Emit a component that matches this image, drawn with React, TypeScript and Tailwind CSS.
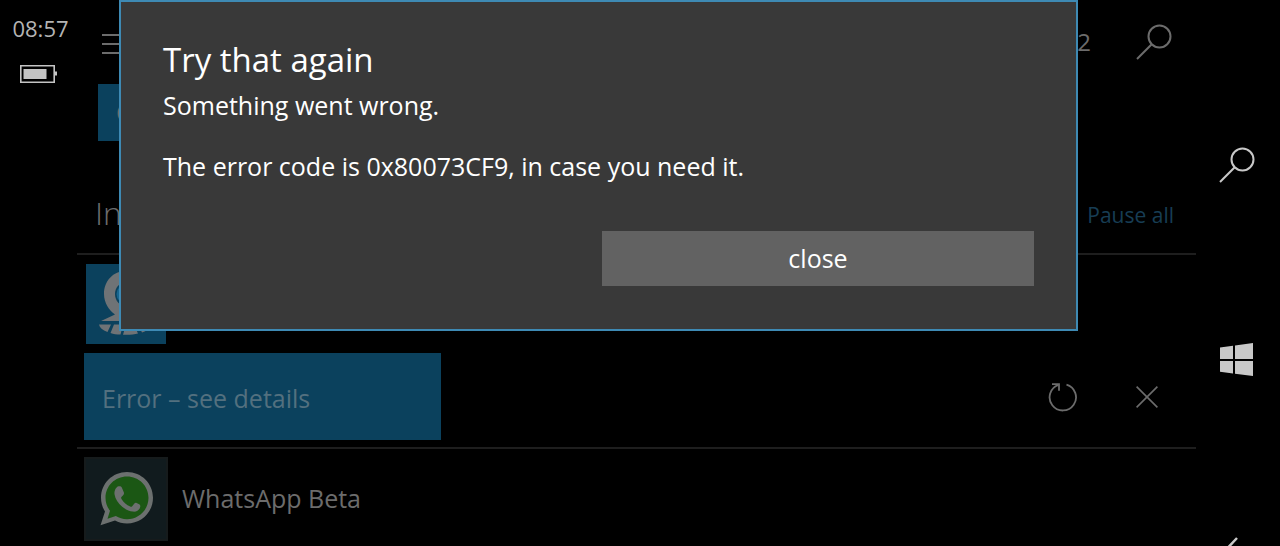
import type { ReactNode } from 'react';

interface IconButtonProps {
  label: string;
  children: ReactNode;
  className?: string;
}

function IconButton({ label, children, className = '' }: IconButtonProps) {
  return (
    <button type="button" aria-label={label} className={`block shrink-0 ${className}`}>
      {children}
    </button>
  );
}

function SearchIcon() {
  return (
    <svg width="36" height="36" viewBox="0 0 36 36" fill="none" stroke="currentColor" strokeWidth="2">
      <circle cx="23.5" cy="12.500" r="11" />
      <path d="M15.7 20.300 1 35" />
    </svg>
  );
}

function WindowsIcon() {
  return (
    <svg width="34" height="34" viewBox="0 0 34 34" fill="currentColor">
      <path d="M0 4.6 13 2.8V16H0zM15 2.5 33 0v16H15zM0 18h13v12.500L0 28.7zM15 18h18V33L15 30.7z" />
    </svg>
  );
}

function BackIcon() {
  return (
    <svg width="34" height="34" viewBox="0 0 34 34" fill="none" stroke="currentColor" strokeWidth="2.5">
      <path d="M17 1 2 17l15 16M2 17h31" />
    </svg>
  );
}

function RetryIcon() {
  return (
    <svg width="30" height="30" viewBox="0 0 30 30" fill="none" stroke="currentColor" strokeWidth="1.8">
      <path d="M18.500 2.600A13.200 13.200 0 1 1 10.500 2.800" />
      <path d="M4 2.200h7v6.500" />
    </svg>
  );
}

function CancelIcon() {
  return (
    <svg width="22" height="22" viewBox="0 0 22 22" fill="none" stroke="currentColor" strokeWidth="1.6">
      <path d="M.6.6l20.8 20.8M21.4.6.6 21.4" />
    </svg>
  );
}

function BatteryIcon() {
  return (
    <svg role="img" aria-label="Battery" width="38" height="18" viewBox="0 0 38 18">
      <path d="M.8.8h33.400v16.400H.8z" fill="none" stroke="#c4c4c4" strokeWidth="1.6" />
      <path d="M3.500 4h23v10h-23zM35 6.500h2v4h-2z" fill="#c4c4c4" />
    </svg>
  );
}

function MapAppIcon() {
  return (
    <svg className="block size-20" viewBox="0 0 80 80">
      <circle cx="40" cy="30" r="9.500" fill="#17668f" />
      <g fill="#6f7376">
        <path
          fillRule="evenodd"
          d="M40 7c-13 0-22 10-22 23 0 9 5 16 11 20.500L15 57h50l-14-6.500C57 46 62 39 62 30 62 17 53 7 40 7zm0 11.500c6.500 0 11 5 11 11.500s-4.500 12-11 12-11-5.500-11-12 4.500-11.500 11-11.500z"
        />
        <path d="M13 60.500h12L21.500 68c-5-2-8-4.500-8.500-7.500zM28 60.500h9L34.500 70.500c-4 0-7-.5-10-1.500zM40 60.500h8l4 9c-4 1-9 1.500-15 1.200zM52 60.500h15c-1 3-5 6-11 8z" />
      </g>
    </svg>
  );
}

function WhatsAppIcon() {
  return (
    <svg className="block size-20" viewBox="0 0 80 80">
      <path fill="#6c706f" d="M41 13C55.500 13 67 24.500 67 38.800S55.500 64.500 41 64.500c-4.500 0-8.500-1-12-3L14.500 66.300 19 52.500C16.500 48.500 15 44 15 38.800 15 24.500 26.500 13 41 13z" />
      <path fill="#1b5714" d="M41 17.500c12 0 21.500 9.500 21.500 21.300S53 60.200 41 60.200c-4.200 0-8-1.200-11.200-3.200L21.500 59.700 24 51.700C21 48 19.500 43.500 19.500 38.800c0-11.800 9.500-21.300 21.500-21.300z" />
      <path fill="#6c706f" d="M32.500 27.300c1.500-.3 2.800 0 3.400 1.400l2 4.700c.4 1.200-.2 2-1 3l-1.500 1.700c-.5.6-.3 1.200.1 1.900 2.200 3.500 5 6 8.700 7.600.8.400 1.400.3 2-.4l2.200-2.700c.7-.8 1.400-.9 2.200-.5l2.600 1.200c1 .5 1.300 1.500 1 2.700-.8 3.500-4 5.200-7.500 4.700-3.300-.4-6.500-1.500-10.500-4.800-4-3.500-7-7.800-7.700-12.500-.4-3.400 1.400-7.300 4-8z" />
    </svg>
  );
}

function StatusBar() {
  return (
    <aside className="flex w-[77px] shrink-0 flex-col items-center pt-3 text-[#b4b4b4]">
      <time className="pl-1 text-[22px] leading-8">08:57</time>
      <div className="pt-[21px]">
        <BatteryIcon />
      </div>
    </aside>
  );
}

function NavigationBar() {
  return (
    <nav aria-label="System" className="flex w-[84px] shrink-0 flex-col items-center gap-[160px] pt-[147px] pr-0.5 text-[#c8c8c8]">
      <IconButton label="Search phone">
        <SearchIcon />
      </IconButton>
      <IconButton label="Start">
        <WindowsIcon />
      </IconButton>
      <IconButton label="Back">
        <BackIcon />
      </IconButton>
    </nav>
  );
}

function ErrorDialog() {
  return (
    <section
      role="dialog"
      aria-labelledby="dialog-title"
      className="absolute top-0 right-[118px] left-[42px] flex flex-col border-2 border-[#3e8ab4] bg-[#393939] px-[42px] pt-[35px] pb-[43px] text-white"
    >
      <h2 id="dialog-title" className="text-[33px] leading-[46px]">
        Try that again
      </h2>
      <p className="pt-px text-[25px] leading-[42px]">Something went wrong.</p>
      <p className="pt-[19px] text-[25px] leading-[42px]">The error code is 0x80073CF9, in case you need it.</p>
      <button type="button" className="mt-11 h-[55px] w-[432px] max-w-full self-end bg-[#626262] pb-0.5 text-[25px] leading-8">
        close
      </button>
    </section>
  );
}

export default function App() {
  return (
    <div className="flex h-screen overflow-hidden bg-black font-['Open_Sans','Noto_Sans',sans-serif]">
      <StatusBar />
      <main className="relative min-w-0 flex-1 text-[#6c6c6c]">
        <header className="flex h-[84px] items-center pr-6 pl-[25px]">
          <IconButton label="Menu" className="pt-1">
            <svg width="32" height="22" viewBox="0 0 32 22" fill="none" stroke="currentColor" strokeWidth="2">
              <path d="M0 2h32M0 11h32M0 20h32" />
            </svg>
          </IconButton>
          <span className="ml-auto pr-[45px] text-[24px]">2</span>
          <IconButton label="Search store">
            <SearchIcon />
          </IconButton>
        </header>

        <button type="button" className="ml-[21px] block h-[57px] w-60 bg-[#0b415d] px-[18px] text-left text-[25px]">
          C
        </button>

        <div className="flex h-[114px] items-center justify-between border-b-2 border-[#1e1e1e] pt-8 pr-[22px] pl-[18px]">
          <h1 className="text-[32px] font-light">In</h1>
          <a href="#pause" className="pt-1.5 text-[21px] text-[#173d54]">
            Pause all
          </a>
        </div>

        <ul>
          <li className="border-b-2 border-[#1e1e1e] pt-[9px] pb-[7px] pl-[7px]">
            <div className="ml-0.5 size-20 bg-[#0b415d]">
              <MapAppIcon />
            </div>
            <div className="mt-[9px] flex items-center pr-[38px]">
              <button type="button" className="h-[87px] w-[357px] bg-[#0b415d] px-[18px] pt-1 text-left text-[25px] text-[#53707f]">
                Error – see details
              </button>
              <IconButton label="Retry" className="ml-auto">
                <RetryIcon />
              </IconButton>
              <IconButton label="Cancel" className="ml-[58px]">
                <CancelIcon />
              </IconButton>
            </div>
          </li>
          <li className="flex items-center pt-2 pl-[7px]">
            <div className="border-2 border-[#161b1c] bg-[#111b1e]">
              <WhatsAppIcon />
            </div>
            <span className="pl-3.5 text-[25px]">WhatsApp Beta</span>
          </li>
        </ul>

        <ErrorDialog />
      </main>
      <NavigationBar />
    </div>
  );
}
